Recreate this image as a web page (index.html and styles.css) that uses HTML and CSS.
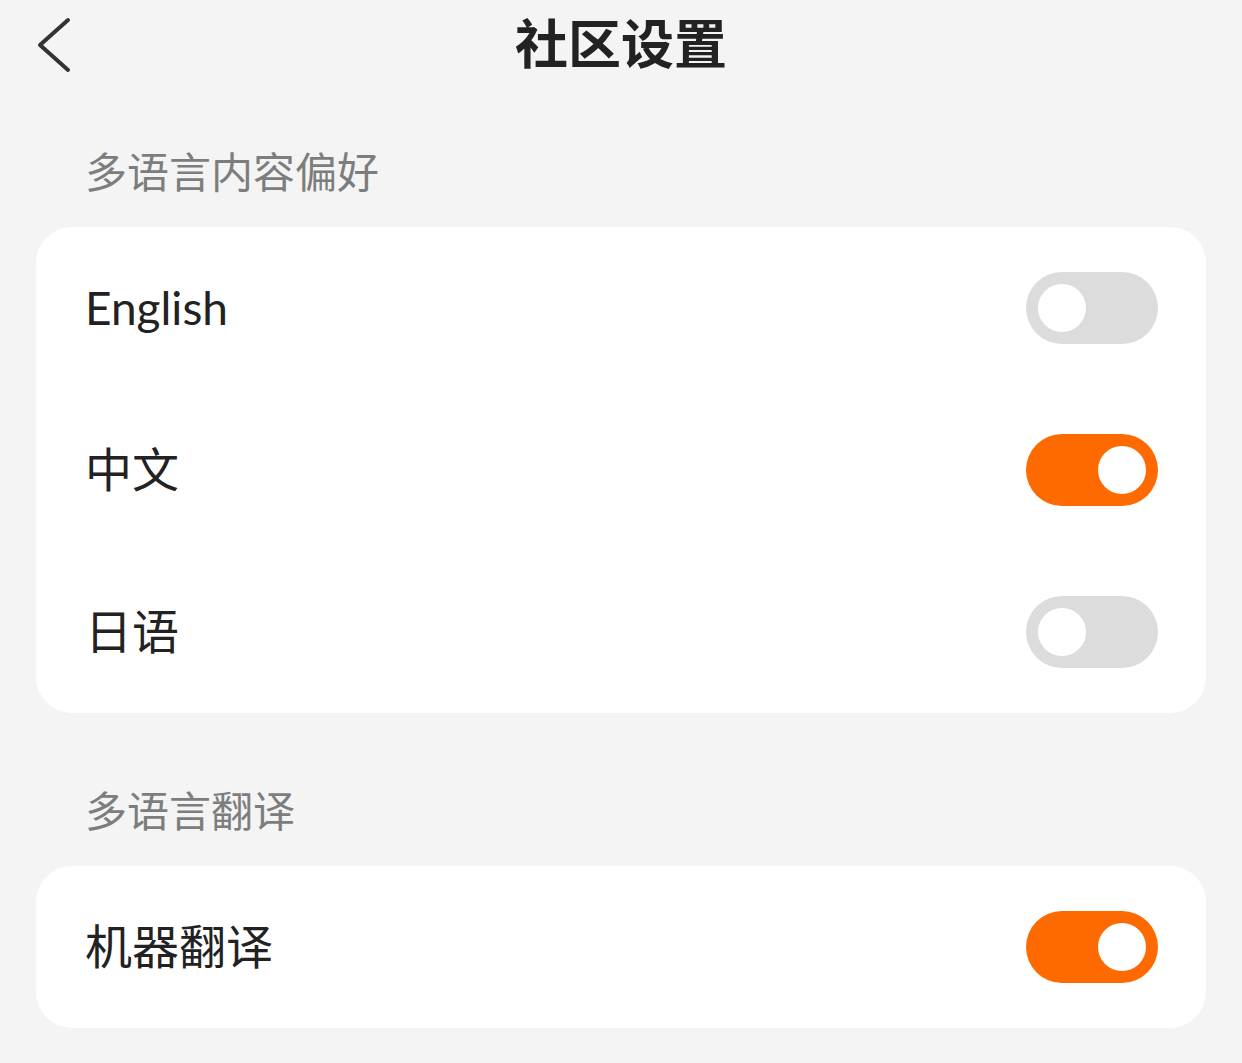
FILE: index.html
```html
<!DOCTYPE html>
<html lang="zh-CN">
<head>
<meta charset="utf-8">
<title>社区设置</title>
<link rel="stylesheet" href="styles.css">
</head>
<body>
  <header class="topbar">
    <button class="back" aria-label="返回">
      <svg width="40" height="60" viewBox="0 0 40 60">
        <polyline points="32,6 4,31 32,56" fill="none" stroke="#333" stroke-width="4" stroke-linecap="round" stroke-linejoin="round"/>
      </svg>
    </button>
    <h1 class="title">社区设置</h1>
  </header>

  <section class="section">
    <h2 class="section-label">多语言内容偏好</h2>
    <div class="card">
      <div class="row">
        <span class="row-text latin">English</span>
        <span class="switch"><span class="knob"></span></span>
      </div>
      <div class="row">
        <span class="row-text">中文</span>
        <span class="switch on"><span class="knob"></span></span>
      </div>
      <div class="row">
        <span class="row-text">日语</span>
        <span class="switch"><span class="knob"></span></span>
      </div>
    </div>
  </section>

  <section class="section">
    <h2 class="section-label">多语言翻译</h2>
    <div class="card">
      <div class="row">
        <span class="row-text">机器翻译</span>
        <span class="switch on"><span class="knob"></span></span>
      </div>
    </div>
  </section>
</body>
</html>
```

FILE: styles.css
```css
html, body {
  margin: 0;
  padding: 0;
  background: #f4f4f4;
}

body {
  font-family: "Noto Sans CJK SC", "Noto Sans", sans-serif;
  color: #222;
}

/* top navigation bar */
.topbar {
  position: relative;
  height: 88px;
  display: flex;
  align-items: center;
  justify-content: center;
}

.back {
  position: absolute;
  left: 36px;
  top: 14px;
  width: 40px;
  height: 60px;
  padding: 0;
  border: 0;
  background: none;
  display: flex;
}

.title {
  margin: 0;
  padding-bottom: 7px;
  font-size: 53px;
  font-weight: 700;
  line-height: 74px;
  color: #222;
}

/* grouped settings */
.section {
  padding: 0 36px;
}

.section-label {
  margin: 0;
  padding: 52px 0 27px 49px;
  font-size: 42px;
  line-height: 60px;
  font-weight: 400;
  color: #7d7d7d;
}

.section + .section .section-label {
  padding-top: 66px;
}

.card {
  background: #fff;
  border-radius: 36px;
  display: flex;
  flex-direction: column;
}

.row {
  height: 162px;
  display: flex;
  align-items: center;
  justify-content: space-between;
  padding: 0 48px 0 49px;
}

.row-text {
  font-size: 47px;
  line-height: 60px;
  padding-bottom: 6px;
  color: #222;
}

.row-text.latin {
  font-family: "Lato", "Noto Sans", sans-serif;
  font-size: 46px;
  padding: 0;
}

/* toggle switch */
.switch {
  width: 132px;
  height: 72px;
  border-radius: 36px;
  background: #dcdcdc;
  display: flex;
  align-items: center;
  padding: 0 12px;
  box-sizing: border-box;
}

.switch .knob {
  width: 48px;
  height: 48px;
  border-radius: 50%;
  background: #fff;
}

.switch.on {
  background: #ff6a00;
  justify-content: flex-end;
}
```
